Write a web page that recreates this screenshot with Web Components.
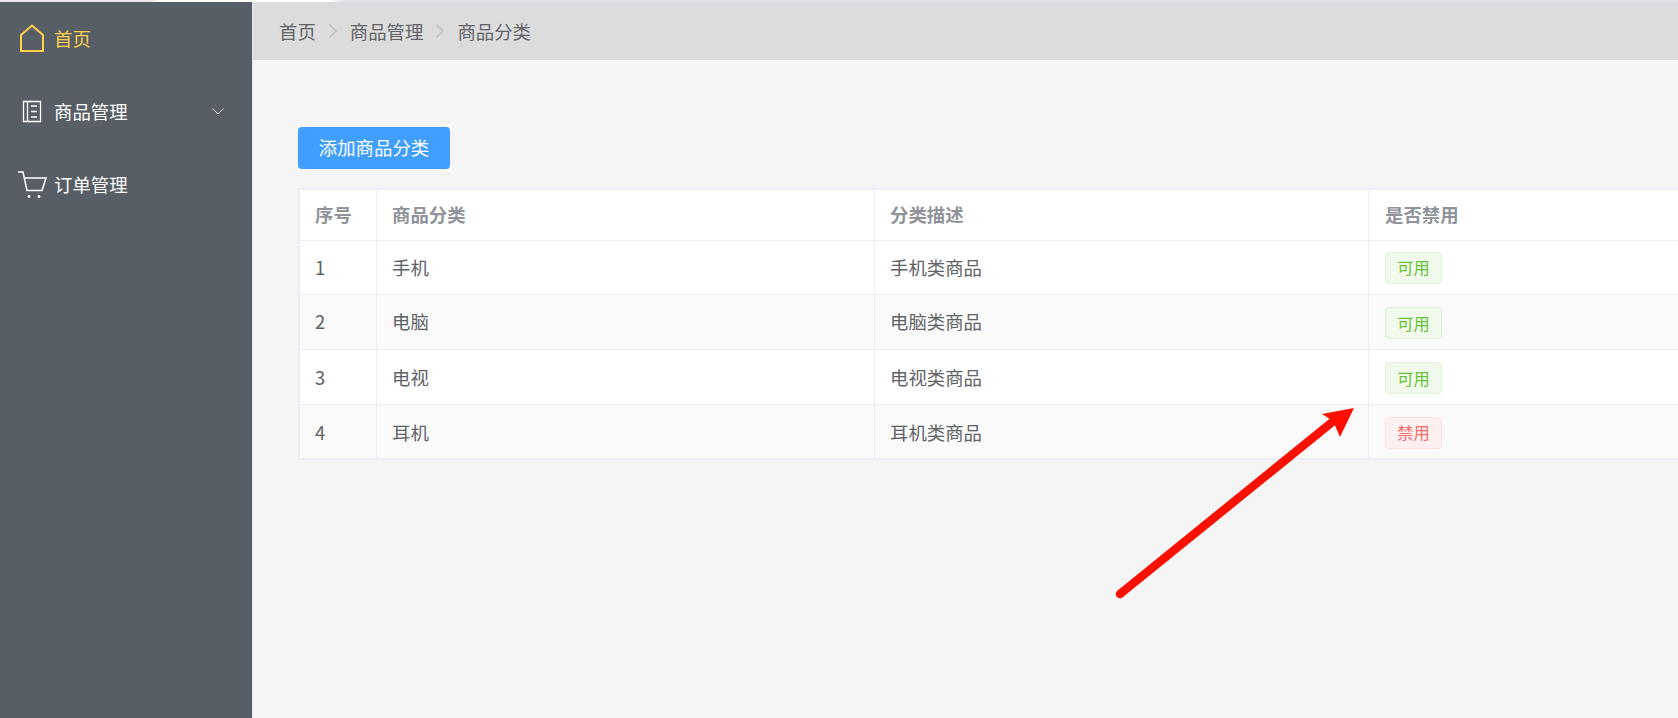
<!DOCTYPE html>
<html lang="zh"><head><meta charset="utf-8">
<style>
html,body{margin:0;padding:0;height:100%;overflow:hidden;background:#f5f5f5;font-family:"Noto Sans CJK SC","Liberation Sans",sans-serif}
</style></head><body>
<app-shell>
<top-strip slot="strip"></top-strip>
<side-nav slot="side">
<nav-item icon="home" active>首页</nav-item>
<nav-item icon="book" chevron>商品管理</nav-item>
<nav-item icon="cart">订单管理</nav-item>
</side-nav>
<bread-bar slot="head"><bread-crumb>首页</bread-crumb><bread-crumb sep>商品管理</bread-crumb><bread-crumb sep>商品分类</bread-crumb></bread-bar>
<category-page slot="main">
<add-button>添加商品分类</add-button>
<category-table>
<table-row head h="50"><span>序号</span><span>商品分类</span><span>分类描述</span><span>是否禁用</span></table-row>
<table-row h="53"><span>1</span><span>手机</span><span>手机类商品</span><status-tag kind="ok">可用</status-tag></table-row>
<table-row h="54" alt><span>2</span><span>电脑</span><span>电脑类商品</span><status-tag kind="ok" nudge>可用</status-tag></table-row>
<table-row h="54" low><span>3</span><span>电视</span><span>电视类商品</span><status-tag kind="ok" nudge>可用</status-tag></table-row>
<table-row h="53" alt last low><span>4</span><span>耳机</span><span>耳机类商品</span><status-tag kind="off" nudge>禁用</status-tag></table-row>
</category-table>
</category-page>
<red-arrow slot="over"></red-arrow>
</app-shell>
<script>
const def=(name,html)=>customElements.define(name,class extends HTMLElement{
  constructor(){super();this.attachShadow({mode:'open'}).innerHTML=typeof html==='function'?html(this):html;}
});
def('app-shell',`<style>
:host{display:grid;grid-template-columns:252px 1fr;grid-template-rows:2px 58px 658px;width:1678px;height:718px;position:relative;overflow:hidden}
::slotted([slot=strip]){grid-column:1/3}
::slotted([slot=side]){grid-row:2/4}
</style><slot name="strip"></slot><slot name="side"></slot><slot name="head"></slot><slot name="main"></slot><slot name="over"></slot>`);
def('top-strip',`<style>:host{display:block;height:2px;background:linear-gradient(90deg,#e8e8ec 0,#e8e8ec 150px,#fff 160px,#fff 330px,#e4e3ea 342px,#e4e3ea 100%)}</style>`);
def('side-nav',`<style>:host{display:flex;flex-direction:column;background:#575e66;height:100%}</style><slot></slot>`);
const icons={
home:`<svg width="26" height="29" viewBox="0 0 26 29" fill="none" stroke="currentColor" stroke-width="2" style="margin-left:19px"><path d="M2 11L13 1.500L24 11V27H2Z"/></svg>`,
book:`<svg width="20" height="23" viewBox="0 0 20 23" fill="none" stroke="currentColor" stroke-width="1.300" style="margin-left:22px"><path d="M1.500 1.500H18.500V21.500H1.500Z"/><path d="M5.500 1.500V21.500"/><path d="M9 6H15M9 11.500H15M9 17H15"/></svg>`,
cart:`<svg width="30" height="28" viewBox="0 0 30 28" fill="none" stroke="currentColor" stroke-width="1.500" style="margin-left:18px;margin-top:1px"><path d="M0 1H5L9 19.500H24L28 7H6"/><circle cx="11" cy="25.500" r="1.400" fill="currentColor" stroke="none"/><circle cx="21" cy="25.500" r="1.400" fill="currentColor" stroke="none"/></svg>`};
def('nav-item',h=>{
 const active=h.hasAttribute('active'),chev=h.hasAttribute('chevron'),ic=h.getAttribute('icon');
 return `<style>:host{display:flex;align-items:center;height:73px;font-size:18.4px;color:${active?'#ffd04b':'#fff'}}
 .ic{display:flex;align-items:center;width:54px;flex:none}
 .t{flex:1;padding-bottom:2px}
 svg.ch{display:block;margin-right:28px}</style>
 <span class="ic">${icons[ic]||''}</span><span class="t"><slot></slot></span>
 ${chev?`<svg class="ch" width="12" height="7" viewBox="0 0 12 7" fill="none" stroke="#fff" stroke-width="1"><path d="M.500.500L6 6L11.500.500"/></svg>`:''}`;
});
def('bread-bar',`<style>:host{display:flex;align-items:center;background:#dcdcdc;padding-left:26px;border-left:1px solid #e4e8ee;height:58px;font-size:18.4px;color:#606266}</style><slot></slot>`);
def('bread-crumb',h=>`<style>:host{display:inline-flex;align-items:center}svg{margin:0 13px}</style>
${h.hasAttribute('sep')?`<svg width="8" height="14" viewBox="0 0 8 14" fill="none" stroke="#b6b9bf" stroke-width="1.100"><path d="M.5.5L7.200 7L.5 13.500"/></svg>`:''}<slot></slot>`);
def('category-page',`<style>:host{display:flex;flex-direction:column;align-items:flex-start;gap:19px;padding:67px 0 0 45px;background:#f5f5f5;border-left:1px solid #e4e8ee;overflow:hidden}</style><slot></slot>`);
def('add-button',`<style>:host{display:flex;align-items:center;justify-content:center;width:152px;height:42px;padding-bottom:2px;box-sizing:border-box;border-radius:4px;background:#409eff;color:#fff;font-size:18.4px}</style><slot></slot>`);
def('category-table',`<style>:host{display:block;width:1400px;box-sizing:border-box;border:2px solid #ebeef5;background:#fff}</style><slot></slot>`);
def('table-row',h=>`<style>:host{display:grid;grid-template-columns:77px 498px 494px 1fr;height:${h.getAttribute('h')}px;
 ${h.hasAttribute('last')?'':'border-bottom:1px solid #ebeef5;'}
 background:${h.hasAttribute('alt')?'#fafafa':'#fff'};font-size:18.4px;color:${h.hasAttribute('head')?'#909399':'#606266'};font-weight:${h.hasAttribute('head')?700:400}}
 ::slotted(*){display:flex;align-items:center;padding-left:15px;padding-bottom:${h.hasAttribute('low')?0:2}px;border-right:1px solid #ebeef5;box-sizing:border-box}
 ::slotted(:last-child){padding-left:16px}
 ::slotted(status-tag){border:0;padding-left:16px;padding-bottom:0}
 </style><slot></slot>`);
def('status-tag',h=>{const ok=h.getAttribute('kind')==='ok';return `<style>:host{display:flex;align-items:center;${h.hasAttribute('nudge')?'padding-top:2px;':''}}
 b{font-weight:400;display:flex;align-items:center;justify-content:center;width:57px;height:32px;padding-bottom:1px;box-sizing:border-box;border-radius:4px;font-size:16.300px;
 background:${ok?'#f0f9eb':'#fef0f0'};border:1px solid ${ok?'#e1f3d8':'#fde2e2'};color:${ok?'#67c23a':'#f56c6c'}}</style><b><slot></slot></b>`});
def('red-arrow',`<style>:host{position:absolute;left:1100px;top:390px;width:280px;height:220px;display:block;pointer-events:none}svg{display:block}</style>
<svg width="280" height="220" viewBox="0 0 280 220" fill="none"><path d="M20 204L236 29" stroke="#f81000" stroke-width="8.500" stroke-linecap="round"/><path d="M222 24L254 18L240 47L233 31Z" fill="#ff0d00"/></svg>`);
</script></body></html>
